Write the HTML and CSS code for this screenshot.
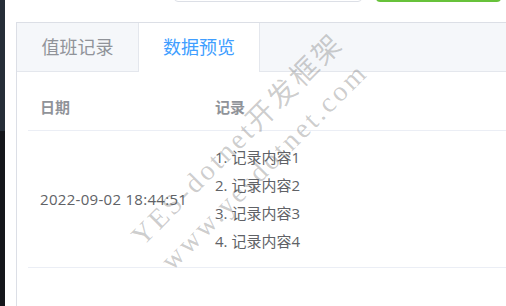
FILE: index.html
```html
<html>
    <head>
        <meta charset="utf-8">
        <link rel="stylesheet" href="styles.css">
    </head>
    <body>
        <div class="sidebar">
            <div class="sidebar-top"></div>
            <div class="sidebar-bottom"></div>
        </div>
        <div class="main">
            <div class="toolbar">
                <div class="search-input"></div>
                <div class="btn-green"></div>
            </div>
            <div class="card">
                <div class="tabs">
                    <div class="tab">值班记录</div>
                    <div class="tab active">数据预览</div>
                </div>
                <div class="tab-content">
                    <table class="data-table">
                        <tr>
                            <th class="col-date">日期</th>
                            <th>记录</th>
                        </tr>
                        <tr>
                            <td class="col-date date-text">2022-09-02 18:44:51</td>
                            <td>
                                <div class="item">1. 记录内容1</div>
                                <div class="item">2. 记录内容2</div>
                                <div class="item">3. 记录内容3</div>
                                <div class="item">4. 记录内容4</div>
                            </td>
                        </tr>
                    </table>
                </div>
            </div>
        </div>
        <!-- watermark over the page -->
        <div class="watermark">
            <div>YES-dotnet开发框架</div>
            <div>www.yesdotnet.com</div>
        </div>
    </body>
</html>
```

FILE: styles.css
```css
body {
    margin: 0;
    position: relative;
    display: flex;
    overflow: hidden;
    height: 306px;
    font-family: "Open Sans", "Noto Sans CJK SC", sans-serif;
    background-color: white;
}
        .sidebar {
            width: 5px;
            display: flex;
            flex-direction: column;
            flex-shrink: 0;
        }
        .sidebar-top {
            height: 131px;
            background-color: #262e38;
        }
        .sidebar-bottom {
            flex: 1;
            background-color: #14161b;
        }
        .main {
            padding-left: 11px;
            width: 490px;
            flex-shrink: 0;
        }
        .toolbar {
            display: flex;
            align-items: flex-end;
            height: 2px;
            overflow: hidden;
            margin-bottom: 20px;
        }
        .search-input {
            width: 188px;
            height: 32px;
            margin-left: 158px;
            border: 1px solid #dcdfe6;
            border-radius: 4px;
            box-sizing: border-box;
        }
        .btn-green {
            width: 125px;
            height: 32px;
            margin-left: 14px;
            background-color: #67c23a;
            border-radius: 4px;
        }
        .card {
            border: 1px solid #dcdfe6;
            border-right: none;
            border-bottom: none;
            height: 284px;
            box-sizing: border-box;
            overflow: hidden;
        }
        .tabs {
            display: flex;
            height: 48px;
            background-color: #f5f7fa;
            border-bottom: 1px solid #e4e7ed;
        }
        .tab {
            width: 121px;
            text-align: center;
            line-height: 48px;
            font-size: 18px;
            color: #909399;
        }
        .tab.active {
            width: 120px;
            background-color: white;
            color: #409eff;
            border-left: 1px solid #e4e7ed;
            border-right: 1px solid #e4e7ed;
            height: 49px;
        }
        .tab-content {
            padding: 12px 0 12px 11px;
        }
        .data-table {
            width: 100%;
            border-collapse: collapse;
            font-size: 15px;
            color: #606266;
        }
        .data-table th {
            text-align: left;
            font-weight: bold;
            color: #909399;
            padding: 12px;
            line-height: 22px;
            border-bottom: 1px solid #ebeef5;
        }
        .data-table td {
            padding: 12px;
            vertical-align: middle;
            border-bottom: 1px solid #ebeef5;
        }
        .col-date {
            width: 151px;
        }
        .date-text {
            letter-spacing: 0.3px;
        }
        .item {
            line-height: 28px;
        }
        .watermark {
            position: absolute;
            left: 91px;
            top: 115px;
            width: 320px;
            line-height: 38px;
            text-align: center;
            transform: rotate(-45deg);
            font-family: "Liberation Serif", "Noto Sans CJK SC", serif;
            font-size: 28px;
            letter-spacing: 3px;
            color: rgba(100, 100, 100, 0.33);
            white-space: nowrap;
            pointer-events: none;
        }
```
